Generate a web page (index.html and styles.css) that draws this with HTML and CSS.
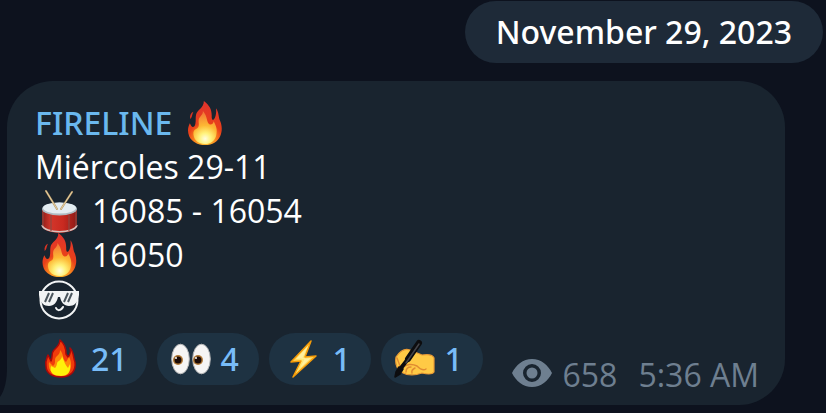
FILE: index.html
```html
<!DOCTYPE html>
<html lang="es">
<head>
<meta charset="utf-8">
<meta name="viewport" content="width=device-width, initial-scale=1">
<title>FIRELINE</title>
<link rel="stylesheet" href="styles.css">
</head>
<body>
<svg class="defs" aria-hidden="true">
  <defs>
    <radialGradient id="flame-outer" gradientUnits="userSpaceOnUse" cx="53" cy="120" r="108">
      <stop offset="0" stop-color="#ffd83a"/>
      <stop offset=".3" stop-color="#f9861d"/>
      <stop offset=".5" stop-color="#e8401a"/>
      <stop offset="1" stop-color="#e0352b"/>
    </radialGradient>
    <radialGradient id="flame-inner" gradientUnits="userSpaceOnUse" cx="53" cy="116" r="82">
      <stop offset="0" stop-color="#fffde0"/>
      <stop offset=".22" stop-color="#fff27a"/>
      <stop offset=".5" stop-color="#fdb834"/>
      <stop offset="1" stop-color="#f27436"/>
    </radialGradient>
    <linearGradient id="drum-body">
      <stop offset="0" stop-color="#8f1d18"/>
      <stop offset=".25" stop-color="#d2362b"/>
      <stop offset=".6" stop-color="#c92a20"/>
      <stop offset="1" stop-color="#8c1a16"/>
    </linearGradient>
    <linearGradient id="bolt-fill" x1="0" y1="0" x2="1" y2="1">
      <stop offset="0" stop-color="#ffb21c"/>
      <stop offset=".5" stop-color="#ffe877"/>
      <stop offset="1" stop-color="#ffae12"/>
    </linearGradient>
    <symbol id="fire" viewBox="0 0 105 135">
      <path fill="url(#flame-outer)" d="M49 0C66 13 74 26 73 48C73 57 76 60 80 56C86 49 88 35 86 22C96 35 93 49 99 61C105 75 106 93 99 108C91 126 76 135 53 135C29 135 11 124 4 108C-2 93 0 80 6 68L10 76C14 82 21 81 23 70C25 60 23 52 25 42C28 27 49 22 49 0Z"/>
      <path fill="#d93424" d="M17 33C9 36 5 45 7 55C13 52 12 43 17 33Z"/>
      <path fill="url(#flame-inner)" d="M46 31C57 43 57 54 61 65C65 75 77 75 79 62C87 78 91 86 87 105C83 123 70 132 52 132C33 132 19 121 17 103C16 94 19 89 25 86C38 80 32 69 33 59C34 47 47 45 46 31Z"/>
    </symbol>
  </defs>
</svg>

<main class="chat">
  <time class="date" datetime="2023-11-29">November 29, 2023</time>

  <article class="bubble">
    <svg class="tail" viewBox="0 0 8 38" aria-hidden="true"><path d="M8 0H7C7 13 5 23 0 30V38H8Z"/></svg>

    <div class="text">
      <h1 class="author">FIRELINE <svg class="emoji flame" role="img" aria-label="fire" viewBox="0 0 105 135"><use href="#fire"/></svg></h1>
      <p>Miércoles 29-11</p>
      <p class="entry">
        <svg class="emoji" role="img" aria-label="drum" viewBox="0 0 42 44">
          <path fill="url(#drum-body)" d="M4 21V37C5 46 38 46 39 37V21Z"/>
          <path fill="none" stroke="#d6c1bd" stroke-width="1.5" d="M4 36C6 45 37 45 39 36"/>
          <path fill="none" stroke="#8d4841" stroke-width="1.2" d="M13 26V42M31 26V42M5 22V37M38 22V37"/>
          <ellipse cx="21.500" cy="20" rx="17.500" ry="6.500" fill="#aebbc2"/>
          <ellipse cx="21.500" cy="19" rx="16.500" ry="5.500" fill="#e4edf2"/>
          <path fill="none" stroke="#b99b69" stroke-width="2" stroke-linecap="round" d="M8 2L19 20M34 3L23 20"/>
          <path fill="none" stroke="#e5cfa2" stroke-width="1" stroke-linecap="round" d="M8 2L19 20M34 3L23 20"/>
        </svg>
        <span>16085 - 16054</span>
      </p>
      <p class="entry">
        <svg class="emoji" role="img" aria-label="fire" viewBox="0 0 42 44"><use href="#fire" x="4" y="0" width="35" height="44"/></svg>
        <span>16050</span>
      </p>
      <p class="entry">
        <svg class="emoji" role="img" aria-label="smiling face with sunglasses" viewBox="0 0 42 44">
          <circle cx="21" cy="23" r="18.500" fill="none" stroke="#f2f4f5" stroke-width="2"/>
          <path fill="#f2f4f5" d="M1 14H41V18C40 26 36 29 31 29C26 29 23 25 22 20H20C19 25 16 29 11 29C6 29 2 26 1 18Z"/>
          <path stroke="#4b565e" stroke-width="2" d="M11 16L7 25M15 16L11 25M30 16L26 25M34 16L30 25"/>
          <path fill="none" stroke="#f2f4f5" stroke-width="2" stroke-linecap="round" d="M18 31C19 34 23 34 25 30"/>
        </svg>
      </p>
    </div>

    <footer class="footer">
      <div class="reactions">
        <button class="reaction" type="button">
          <svg class="icon" aria-hidden="true" viewBox="0 0 42 40">
            <path fill="#f13b0b" stroke="#ad0808" stroke-width="1.500" stroke-linejoin="round" d="M20 1C25 5 26 9 26 15L28 18C30 16 31 12 30 9C34 13 33 18 35 23C36 31 32 38 21 38C12 38 6 34 6 27C5 22 7 19 8 16L11 22C13 18 11 14 14 11C17 8 20 6 20 1Z"/>
            <path fill="#ff8a0a" d="M20 11C24 15 22 20 26 23L29 18C33 25 32 36 21 36C10 36 8 29 9 23L13 27C17 24 13 20 17 17C19 15 20 14 20 11Z"/>
            <path fill="#fff20a" d="M22 17C24 22 25 26 28 29L30 25C31 33 28 37 21 37C14 37 9 34 11 27L15 29C18 26 16 23 19 22C21 20 22 19 22 17Z"/>
          </svg>
          <span>21</span>
        </button>
        <button class="reaction" type="button">
          <svg class="icon" aria-hidden="true" viewBox="0 0 42 40">
            <g fill="#f6f5f4" stroke="#b9b9b9"><ellipse cx="10.500" cy="20" rx="8.800" ry="14.800"/><ellipse cx="31.500" cy="20" rx="8.800" ry="14.800"/></g>
            <g fill="#b17a38"><circle cx="8" cy="21" r="5"/><circle cx="28" cy="21" r="5"/></g>
            <g fill="#1b0b06"><circle cx="8" cy="21" r="3.500"/><circle cx="28" cy="21" r="3.500"/></g>
            <g fill="#fff"><circle cx="6" cy="19" r="1"/><circle cx="26" cy="19" r="1"/></g>
          </svg>
          <span>4</span>
        </button>
        <button class="reaction" type="button">
          <svg class="icon" aria-hidden="true" viewBox="0 0 42 40">
            <path fill="url(#bolt-fill)" stroke="#f59b08" stroke-width="1.500" stroke-linejoin="round" d="M29 2L9 23L19 22L11 38L34 17L23 18Z"/>
            <path fill="#fff0a0" d="M26 7L14 20L23 19L18 29L29 19L20 20Z"/>
          </svg>
          <span>1</span>
        </button>
        <button class="reaction" type="button">
          <svg class="icon" aria-hidden="true" viewBox="0 0 42 40">
            <path fill="#ffca45" stroke="#e99a35" stroke-width="1.200" d="M2 18C6 12 11 9 16 11L28 16C34 15 39 16 40 19L40 33C38 36 32 35 28 34C20 37 12 36 7 33C3 30 1 24 2 18Z"/>
            <path fill="none" stroke="#e08b32" stroke-width="1.400" stroke-linecap="round" d="M8 30C12 24 19 25 23 27C26 30 29 32 32 30M12 33C12 30 14 28 17 28M18 34C17 31 19 30 21 29M3 19L6 27"/>
            <path stroke="#0d0d0f" stroke-width="6" stroke-linecap="round" d="M25 4L14 20"/>
            <path stroke="#0d0d0f" stroke-width="4" stroke-linecap="round" d="M14 20L7 29"/>
            <path fill="#0d0d0f" stroke="#0d0d0f" stroke-width="1.500" stroke-linejoin="round" d="M5 28L2 33L1 38L6 35L9 30Z"/>
            <path stroke="#444449" stroke-width="1.500" stroke-linecap="round" d="M25 5L12 24"/>
          </svg>
          <span>1</span>
        </button>
      </div>
      <div class="meta">
        <svg class="eye" role="img" aria-label="views" viewBox="0 0 40 28">
          <path fill-rule="evenodd" d="M0 14C4 6 11 0 20 0S36 6 40 14C36 22 29 28 20 28S4 22 0 14ZM20 5A9 9 0 1 0 20 23A9 9 0 1 0 20 5Z"/>
          <circle cx="20" cy="14" r="5.500"/>
        </svg>
        <span class="views">658</span>
        <time datetime="2023-11-29T05:36">5:36 AM</time>
      </div>
    </footer>
  </article>
</main>
</body>
</html>
```
FILE: styles.css
```css
* {
  box-sizing: border-box;
}

body {
  margin: 0;
  background: #0d121e;
  color: #fff;
  font: 400 32px/44px "Noto Sans", sans-serif;
}

h1,
p {
  margin: 0;
  font-size: inherit;
}

p,
.meta {
  font-family: "Open Sans", "Noto Sans", sans-serif;
}

.defs {
  position: absolute;
  width: 0;
  height: 0;
}

.chat {
  display: flex;
  flex-direction: column;
  gap: 18px;
  padding: 1px 3px 8px 7px;
}

.date {
  align-self: flex-end;
  padding: 9px 31px;
  border-radius: 31px;
  background: #1e2a38;
  font-weight: 500;
}

.bubble {
  position: relative;
  margin-right: 38px;
  padding: 20px 26px 20px 20px;
  border-radius: 46px 46px 46px 0;
  background: #19242f;
}

.tail {
  position: absolute;
  left: -7px;
  bottom: 0;
  width: 8px;
  height: 38px;
  fill: #19242f;
}

.text {
  padding-left: 8px;
}

.author {
  display: flex;
  gap: 15px;
  color: #6ab8ee;
  font-weight: 500;
}

.entry {
  display: flex;
  gap: 12px;
  padding-left: 3px;
}

.emoji {
  flex: none;
  width: 42px;
  height: 44px;
}

.flame {
  width: 36px;
}

.footer {
  display: flex;
  justify-content: space-between;
  margin-top: 12px;
}

.reactions {
  display: flex;
  gap: 10px;
}

.reaction {
  display: flex;
  align-items: center;
  gap: 9px;
  min-width: 102px;
  height: 52px;
  padding: 0 19px 0 13px;
  border: 0;
  border-radius: 26px;
  background: #1e3242;
  color: #78bcf8;
  font: inherit;
  font-weight: 500;
}

.icon {
  flex: none;
  width: 42px;
  height: 40px;
}

.meta {
  display: flex;
  align-self: flex-end;
  align-items: center;
  height: 20px;
  color: #6e7f90;
}

.eye {
  width: 40px;
  height: 28px;
  margin: 0 10px 4px 0;
  fill: currentColor;
}

.views {
  margin-right: 21px;
}
```
